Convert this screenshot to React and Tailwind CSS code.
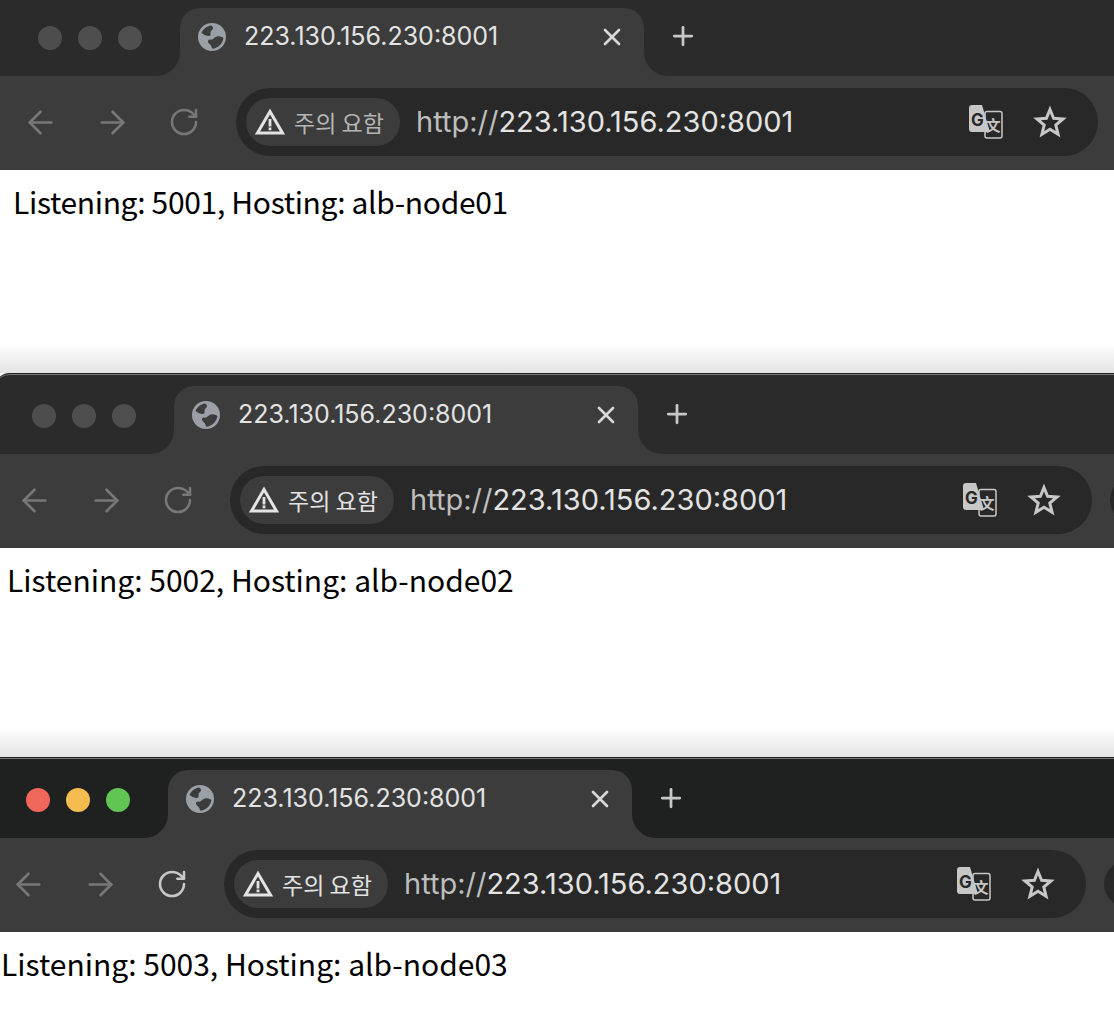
import { ArrowLeft, ArrowRight, RotateCw, X, Plus } from "lucide-react";

const UI = "font-['Inter','Liberation_Sans',sans-serif]";

function Globe() {
  return (
    <svg viewBox="0 0 28 28" className="h-7 w-7 shrink-0">
      <circle cx="14" cy="14" r="14" fill="#9aa0a6" />
      <path d="M13 2.500c-4 .6-8 3.600-9.500 7.500 2 1.500 4 2.500 6.500 3 2 .3 3-1 2.500-3-.3-1.500 1-2.500 2-3.500 1-1.200.4-3.500-1.500-4z" fill="#3c3c3c" />
      <path d="M25.500 15c-1.500-1.200-3.500-2-5.500-1.800-2 .3-3.500 1.300-5 2.800-1 1-2.500.6-3.500.6-1.500.2-2 2-1 3.400 1 1.300 2.500 1.800 3 3.500.2 1 .5 2 1.500 2.200 5-.7 9.500-5 10.500-10.700z" fill="#3c3c3c" />
    </svg>
  );
}

function Warning({ color }) {
  return (
    <svg viewBox="0 0 30 28" className="h-7 w-[30px] shrink-0" style={{ color }}>
      <path d="M15 3.500 L27.500 25 H2.500 Z" fill="none" stroke="currentColor" strokeWidth="3" />
      <rect x="13.600" y="11" width="2.800" height="7.500" fill="currentColor" />
      <rect x="13.600" y="19.500" width="2.800" height="2.800" fill="currentColor" />
    </svg>
  );
}

function Translate() {
  return (
    <svg viewBox="0 0 34 34" className="h-[34px] w-[34px]">
      <rect x="16" y="6.500" width="17" height="26.500" rx="2" fill="#282828" stroke="#c7c7c7" strokeWidth="1.500" />
      <path d="M3 0 H13 L21 27 H3 Q0 27 0 24 V3 Q0 0 3 0 Z" fill="#c7c7c7" />
      <text x="8.500" y="20.500" textAnchor="middle" fontSize="17" fontWeight="700" fill="#282828" fontFamily="Inter, sans-serif">G</text>
      <text x="24" y="26" textAnchor="middle" fontSize="15" fontWeight="700" fill="#c7c7c7" fontFamily="'Noto Sans CJK SC', sans-serif">文</text>
    </svg>
  );
}

function Star() {
  return (
    <svg viewBox="0 0 34 34" className="h-[34px] w-[34px]">
      <path d="M17 4.500 L20.600 13.200 L30 13.900 L22.800 20 L25.100 29.200 L17 24.200 L8.900 29.200 L11.200 20 L4 13.900 L13.400 13.200 Z" fill="none" stroke="#c7c7c7" strokeWidth="3" />
    </svg>
  );
}

function Window({ port, node, shift, dark, topClass, bodyClass, textClass, chipText, reload, dots, fade }) {
  return (
    <section className="overflow-hidden bg-white">
      <div className={`w-[1200px] ${shift}`}>
        <div className={`${dark} ${topClass}`}>
          <div className="flex h-[76px] bg-[#3c3c3c]">
            <div className={`flex w-[180px] shrink-0 items-center gap-4 rounded-br-[24px] pl-[38px] ${dark}`}>
              {dots.map((c) => (
                <span key={c} className={`h-6 w-6 rounded-full ${c}`} />
              ))}
            </div>
            <div className={`w-[464px] shrink-0 pt-2 ${dark}`}>
              <div className="flex h-full items-center rounded-t-[20px] bg-[#3c3c3c] pl-[18px] pr-[18px] pb-[11px]">
                <Globe />
                <span className={`ml-[18px] whitespace-nowrap text-[25px] text-[#e3e3e3] ${UI}`}>223.130.156.230:8001</span>
                <X size={28} strokeWidth={2.3} className="ml-auto text-[#d8d8d8]" />
              </div>
            </div>
            <div className={`flex flex-1 items-center rounded-bl-[24px] pb-[4px] pl-[24px] ${dark}`}>
              <Plus size={30} strokeWidth={2.2} className="text-[#c7c7c7]" />
            </div>
          </div>
        </div>
        <div className="flex h-[94px] items-center bg-[#3c3c3c] pb-[2px] pl-[4px]">
          <div className="flex w-[72px] shrink-0 justify-center">
            <ArrowLeft size={37} strokeWidth={1.7} className="text-[#777777]" />
          </div>
          <div className="flex w-[72px] shrink-0 justify-center">
            <ArrowRight size={37} strokeWidth={1.7} className="text-[#777777]" />
          </div>
          <div className="flex w-[72px] shrink-0 justify-center">
            <RotateCw size={32} strokeWidth={1.9} className={reload} />
          </div>
          <div className="ml-[16px] flex h-[68px] w-[862px] shrink-0 items-center rounded-full bg-[#282828] pl-[10px] pr-[31px]">
            <div className="flex h-12 w-[154px] shrink-0 items-center rounded-full bg-[#3c3c3c] pl-[9px]">
              <Warning color="#e3e3e3" />
              <span className={`ml-[9px] whitespace-nowrap text-[23px] font-['Noto_Sans_CJK_KR',sans-serif] ${chipText}`}>주의 요함</span>
            </div>
            <span className={`ml-[16px] whitespace-nowrap text-[29px] ${UI}`}>
              <span className="text-[#bdbdbd]">http://</span>
              <span className="text-[#e3e3e3]">223.130.156.230:8001</span>
            </span>
            <div className="ml-auto flex items-center gap-[30px]">
              <Translate />
              <Star />
            </div>
          </div>
          <div className="ml-[18px] h-[46px] w-[46px] shrink-0 rounded-full bg-[#282828]" />
        </div>
        <div className={`flex flex-col ${bodyClass}`}>
          <p className={`pl-[13px] pt-[11px] text-[30px] leading-[40px] text-black font-['Noto_Sans_CJK_KR',sans-serif] ${textClass}`}>
            Listening: {port}, Hosting: {node}
          </p>
          {fade && <div className="mt-auto h-[30px] bg-gradient-to-b from-white to-[#e4e4e4]" />}
        </div>
      </div>
    </section>
  );
}

const grayDots = ["bg-[#4d4d4d]", "bg-[#4e4e4e]", "bg-[#4f4f4f]"];
const colorDots = ["bg-[#f1675c]", "bg-[#f5bd4f]", "bg-[#61c554]"];

export default function App() {
  return (
    <div className="h-[1014px] overflow-hidden bg-white">
      <Window
        port="5001"
        node="alb-node01"
        shift="ml-0"
        dark="bg-[#2b2b2b]"
        topClass=""
        bodyClass="h-[203px]"
        textClass="tracking-[-0.33px]"
        chipText="text-[#b4b4b4]"
        reload="text-[#777777]"
        dots={grayDots}
        fade
      />
      <Window
        port="5002"
        node="alb-node02"
        shift="-ml-1.5"
        dark="bg-[#2b2b2b]"
        topClass="rounded-tl-[16px] border-t border-[#222222] pt-[4px] shadow-[inset_0_1px_0_#777777]"
        bodyClass="h-[209px]"
        textClass=""
        chipText="text-[#e3e3e3]"
        reload="text-[#777777]"
        dots={grayDots}
        fade
      />
      <Window
        port="5003"
        node="alb-node03"
        shift="-ml-3"
        dark="bg-[#1f2120]"
        topClass="border-t border-[#222222] pt-[4px] shadow-[inset_0_1px_0_#777777]"
        bodyClass="h-[82px]"
        textClass=""
        chipText="text-[#e3e3e3]"
        reload="text-[#c7c7c7]"
        dots={colorDots}
      />
    </div>
  );
}
